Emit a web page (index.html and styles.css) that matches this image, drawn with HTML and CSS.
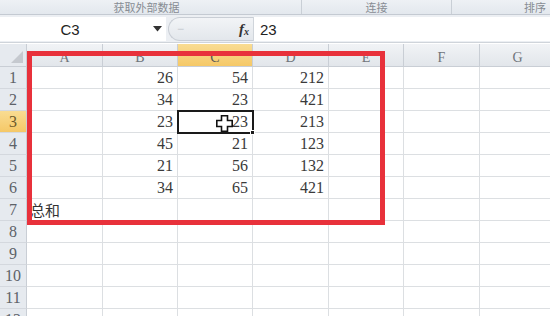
FILE: index.html
```html
<!DOCTYPE html>
<html>
<head>
<meta charset="utf-8">
<link rel="stylesheet" href="styles.css">
</head>
<body>
<div class="app">
  <div class="ribbon">
    <div class="grp g1">获取外部数据</div>
    <div class="grp g2">连接</div>
    <div class="grp g3">排序</div>
  </div>
  <div class="fbar">
    <div class="namebox">C3</div>
    <div class="nbarrow">
      <svg width="9" height="6" viewBox="0 0 9 6"><path d="M0 0H9L4.5 5.5Z" fill="#333"/></svg>
    </div>
    <div class="pill">
      <span class="dash">−</span>
      <span class="fx">f<sub>x</sub></span>
    </div>
    <div class="finput">23</div>
  </div>
  <div class="sheet">
    <div class="grid">
      <div class="corner"><svg width="12" height="12" viewBox="0 0 12 12"><path d="M12 0V12H0Z" fill="#c5c9cf"/></svg></div>
      <div class="ch">A</div><div class="ch">B</div><div class="ch sel">C</div><div class="ch">D</div><div class="ch">E</div><div class="ch">F</div><div class="ch">G</div>

      <div class="rh">1</div><div class="c"></div><div class="c n">26</div><div class="c n">54</div><div class="c n">212</div><div class="c"></div><div class="c"></div><div class="c"></div>
      <div class="rh">2</div><div class="c"></div><div class="c n">34</div><div class="c n">23</div><div class="c n">421</div><div class="c"></div><div class="c"></div><div class="c"></div>
      <div class="rh sel">3</div><div class="c"></div><div class="c n">23</div><div class="c n active">23<span class="handle"></span></div><div class="c n">213</div><div class="c"></div><div class="c"></div><div class="c"></div>
      <div class="rh">4</div><div class="c"></div><div class="c n">45</div><div class="c n">21</div><div class="c n">123</div><div class="c"></div><div class="c"></div><div class="c"></div>
      <div class="rh">5</div><div class="c"></div><div class="c n">21</div><div class="c n">56</div><div class="c n">132</div><div class="c"></div><div class="c"></div><div class="c"></div>
      <div class="rh">6</div><div class="c"></div><div class="c n">34</div><div class="c n">65</div><div class="c n">421</div><div class="c"></div><div class="c"></div><div class="c"></div>
      <div class="rh">7</div><div class="c t">总和</div><div class="c"></div><div class="c"></div><div class="c"></div><div class="c"></div><div class="c"></div><div class="c"></div>
      <div class="rh">8</div><div class="c"></div><div class="c"></div><div class="c"></div><div class="c"></div><div class="c"></div><div class="c"></div><div class="c"></div>
      <div class="rh">9</div><div class="c"></div><div class="c"></div><div class="c"></div><div class="c"></div><div class="c"></div><div class="c"></div><div class="c"></div>
      <div class="rh">10</div><div class="c"></div><div class="c"></div><div class="c"></div><div class="c"></div><div class="c"></div><div class="c"></div><div class="c"></div>
      <div class="rh">11</div><div class="c"></div><div class="c"></div><div class="c"></div><div class="c"></div><div class="c"></div><div class="c"></div><div class="c"></div>
      <div class="rh">12</div><div class="c"></div><div class="c"></div><div class="c"></div><div class="c"></div><div class="c"></div><div class="c"></div><div class="c"></div>
    </div>
    <div class="redbox"></div>
    <svg class="cursor" width="17" height="17" viewBox="0 0 17 17">
      <path d="M5.5 0.8H11.5V5.5H16.2V11.5H11.5V16.2H5.5V11.5H0.8V5.5H5.5Z" fill="#fff" stroke="#111" stroke-width="1.6"/>
    </svg>
  </div>
</div>
</body>
</html>
```
FILE: styles.css
```css
* { box-sizing: border-box; }
html, body { margin: 0; padding: 0; }
body {
  width: 550px;
  height: 316px;
  overflow: hidden;
  background: #fff;
  font-family: "Liberation Serif", "Noto Sans CJK SC", serif;
}
.app { width: 550px; height: 316px; overflow: hidden; display: flex; flex-direction: column; }

.ribbon {
  height: 15px;
  flex: none;
  display: flex;
  background: linear-gradient(#eef1f5, #e3e8ee);
  border-bottom: 1px solid #c4cad2;
}
.grp {
  font-family: "Noto Sans CJK SC", sans-serif;
  font-size: 11px;
  color: #878c93;
  line-height: 14px;
  text-align: center;
  border-right: 1px solid #c9cfd6;
  height: 14px;
}
.g1 { width: 302px; padding-right: 8px; }
.g2 { width: 150px; }
.g3 { width: 98px; border-right: none; text-align: right; padding-right: 4px; }

.fbar {
  height: 28px;
  flex: none;
  display: flex;
  align-items: center;
  background: #eceff3;
  border-bottom: 1px solid #cfd4da;
  padding: 2px 0 1px;
}
.namebox {
  width: 148px;
  height: 24px;
  background: #fff;
  font-family: "Liberation Sans", sans-serif;
  font-size: 15px;
  color: #222;
  display: flex;
  align-items: center;
  justify-content: center;
  padding-right: 8px;
}
.nbarrow {
  width: 18px;
  height: 24px;
  background: #fff;
  display: flex;
  align-items: center;
  justify-content: center;
}
.pill {
  margin-left: 2px;
  width: 85px;
  height: 24px;
  border: 1px solid #c9ced5;
  border-right: none;
  border-radius: 12px 0 0 12px;
  background: linear-gradient(#f2f4f7, #e3e7ec);
  display: flex;
  align-items: center;
  justify-content: space-between;
  padding: 0 4px 0 8px;
}
.dash { color: #c5cad0; font-size: 12px; font-family: "Liberation Sans", sans-serif; }
.fx {
  font-family: "Liberation Serif", serif;
  font-style: italic;
  font-weight: bold;
  font-size: 15px;
  color: #333;
}
.fx sub { font-size: 10px; vertical-align: -1px; }
.finput {
  flex: 1;
  height: 24px;
  background: #fff;
  border-left: 1px solid #d0d5db;
  font-family: "Liberation Sans", sans-serif;
  font-size: 15px;
  color: #222;
  display: flex;
  align-items: center;
  padding-left: 6px;
}

.sheet { position: relative; flex: 1; margin-top: 1px; }
.grid {
  display: grid;
  grid-template-columns: 27px 76px 75px 75px 76px 75px 76px 76px;
  grid-template-rows: 23px repeat(12, 22px);
  width: 556px;
}
.corner {
  background: #e6eaef;
  border-right: 1px solid #c9ced5;
  border-bottom: 1px solid #c9ced5;
  display: flex;
  align-items: flex-end;
  justify-content: flex-end;
  padding: 0 3px 3px 0;
}
.ch {
  background: linear-gradient(#f1f3f6, #e2e6eb);
  border-right: 1px solid #c9ced5;
  border-bottom: 1px solid #c9ced5;
  color: #6f747a;
  font-size: 14px;
  text-align: center;
  line-height: 14px;
  padding-top: 7px;
}
.ch.sel { background: linear-gradient(#f9dc92, #f5c867); color: #555; }
.rh {
  background: #e6eaef;
  border-right: 1px solid #c9ced5;
  border-bottom: 1px solid #d4d8de;
  color: #5d6268;
  font-size: 16px;
  text-align: center;
  line-height: 21px;
}
.rh.sel { background: linear-gradient(#f9dc92, #f5c867); color: #6b5a2a; }
.c {
  border-right: 1px solid #dcdfe2;
  border-bottom: 1px solid #dcdfe2;
  font-size: 16px;
  color: #3a3a3a;
  line-height: 21px;
  position: relative;
}
.n { text-align: right; padding-right: 4px; }
.t {
  font-family: "Noto Sans CJK SC", sans-serif;
  font-size: 15px;
  padding-left: 3px;
  line-height: 22px;
  color: #333;
  white-space: nowrap;
}
.active {
  outline: 2px solid #1a1a1a;
  outline-offset: -1px;
  z-index: 2;
}
.handle {
  position: absolute;
  right: -3px;
  bottom: -3px;
  width: 5px;
  height: 5px;
  background: #1a1a1a;
  border: 1px solid #fff;
}
.redbox {
  position: absolute;
  left: 27px;
  top: 7px;
  width: 358px;
  height: 174px;
  border: 5px solid #e8313b;
  z-index: 3;
}
.cursor {
  position: absolute;
  left: 216px;
  top: 71px;
  z-index: 4;
}
```
